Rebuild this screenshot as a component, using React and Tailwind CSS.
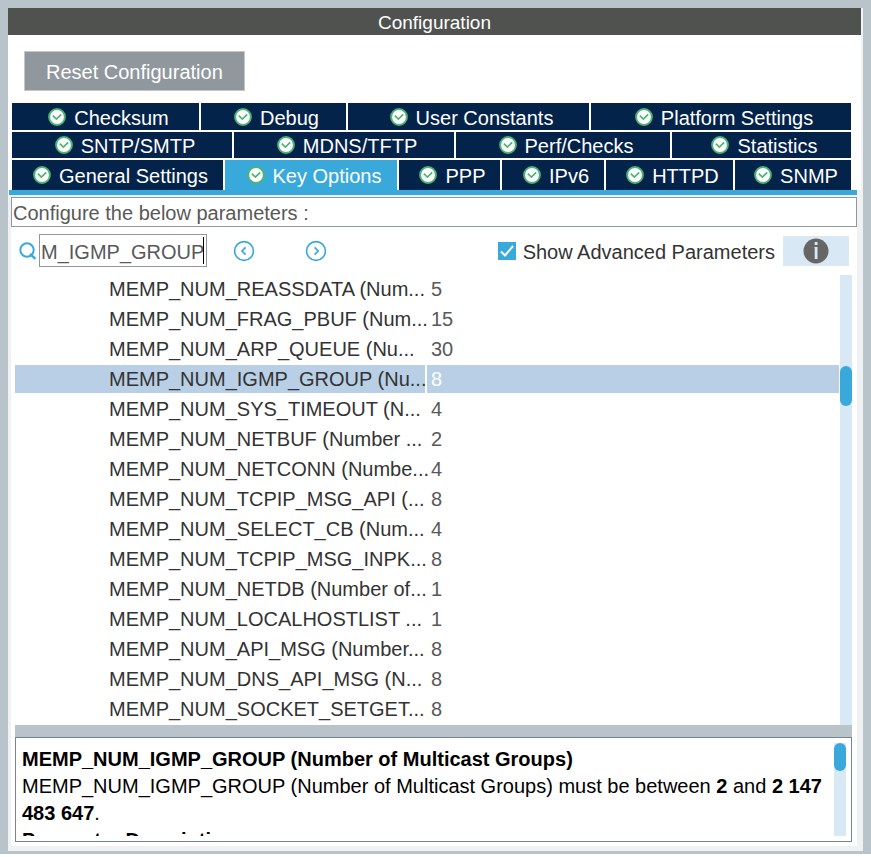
import React, { useState } from "react";

const tabRows = [
  {
    grid: "grid h-[27px] grid-cols-[187fr_145fr_241fr_260fr] gap-x-0.5",
    tabs: ["Checksum", "Debug", "User Constants", "Platform Settings"],
  },
  {
    grid: "grid h-[26px] grid-cols-[220fr_220fr_214fr_179fr] gap-x-0.5",
    tabs: ["SNTP/SMTP", "MDNS/TFTP", "Perf/Checks", "Statistics"],
  },
  {
    grid: "grid h-[30px] grid-cols-[211fr_172fr_101fr_102fr_127fr_116fr] gap-x-0.5",
    tabs: ["General Settings", "Key Options", "PPP", "IPv6", "HTTPD", "SNMP"],
  },
];

const params = [
  ["MEMP_NUM_REASSDATA (Num...", "5"],
  ["MEMP_NUM_FRAG_PBUF (Num...", "15"],
  ["MEMP_NUM_ARP_QUEUE (Nu...", "30"],
  ["MEMP_NUM_IGMP_GROUP (Nu...", "8"],
  ["MEMP_NUM_SYS_TIMEOUT (N...", "4"],
  ["MEMP_NUM_NETBUF (Number ...", "2"],
  ["MEMP_NUM_NETCONN (Numbe...", "4"],
  ["MEMP_NUM_TCPIP_MSG_API (...", "8"],
  ["MEMP_NUM_SELECT_CB (Num...", "4"],
  ["MEMP_NUM_TCPIP_MSG_INPK...", "8"],
  ["MEMP_NUM_NETDB (Number of...", "1"],
  ["MEMP_NUM_LOCALHOSTLIST ...", "1"],
  ["MEMP_NUM_API_MSG (Number...", "8"],
  ["MEMP_NUM_DNS_API_MSG (N...", "8"],
  ["MEMP_NUM_SOCKET_SETGET...", "8"],
];

const CheckBadge = () => (
  <svg viewBox="0 0 18 18" className="size-[18px] shrink-0" aria-hidden="true">
    <circle cx="9" cy="9" r="7.9" fill="#fff" stroke="#4db374" strokeWidth="2" />
    <path d="M4.8 7.6 L8.4 11 L13.2 6.4" fill="none" stroke="#4db374" strokeWidth="1.7" />
  </svg>
);

const SearchIcon = () => (
  <svg viewBox="0 0 18 18" className="size-[18px] shrink-0" fill="none" stroke="#39a9dc" aria-hidden="true">
    <circle cx="8" cy="8" r="6.7" strokeWidth="2" />
    <path d="M11 12 L16.5 16.8" strokeWidth="2.4" />
  </svg>
);

const ArrowIcon = ({ d }) => (
  <svg viewBox="0 0 22 22" className="size-[22px]" fill="none" stroke="#39a9dc" aria-hidden="true">
    <circle cx="11" cy="11" r="9.4" strokeWidth="1.6" />
    <path d={d} strokeWidth="1.7" />
  </svg>
);

const InfoIcon = () => (
  <svg viewBox="0 0 26 26" className="size-[26px]" aria-hidden="true">
    <circle cx="13" cy="13" r="12.5" fill="#666" />
    <rect x="11.7" y="4" width="2.8" height="3" fill="#d9e8f5" />
    <path d="M11.4 9 H14.5 V21 H11.7 V10 H11.4 Z" fill="#d9e8f5" />
  </svg>
);

const Tabs = ({ active, onSelect }) => (
  <div className="flex flex-col gap-0.5 pr-2.5 pl-1 leading-[24px]" role="tablist">
    {tabRows.map((row, i) => (
      <div key={i} className={row.grid} role="presentation">
        {row.tabs.map((tab) => (
          <button
            key={tab}
            type="button"
            role="tab"
            aria-selected={tab === active}
            onClick={() => onSelect(tab)}
            className={`flex items-center justify-center gap-2 pl-1.5 whitespace-nowrap text-white ${
              tab === active ? "bg-[#39a9dc]" : "bg-[#03234b]"
            }`}
          >
            <CheckBadge />
            <span className="pt-0.5">{tab}</span>
          </button>
        ))}
      </div>
    ))}
  </div>
);

const App = () => {
  const [active, setActive] = useState("Key Options");
  const [selected, setSelected] = useState(3);
  const [search, setSearch] = useState("M_IGMP_GROUP");
  const [advanced, setAdvanced] = useState(true);

  return (
    <div className="bg-[#b8c4ca] px-2 pt-2 pb-[3px] font-['Liberation_Sans',Arial,sans-serif] text-[20px] leading-[26px] text-[#333]">
      <div className="bg-[#f0f1f3] pb-[5px]">
        <div className="mr-0.5 bg-white">
          <h1 className="h-[27px] bg-[#50524f] pt-0.5 text-center text-[19px] leading-[26px] text-white">
            Configuration
          </h1>
          <div className="px-4 pt-4 pb-3">
            <button type="button" className="h-10 border border-[#c3c7ca] bg-[#90989e] px-[21px] pt-0.5 text-white">
              Reset Configuration
            </button>
          </div>
          <Tabs active={active} onSelect={setActive} />
        </div>
        <div className="mr-1.5 ml-px h-[5px] bg-[#39a9dc]"></div>

        <div className="mt-0.5 mr-1.5 ml-[3px] bg-white pb-1">
          <p className="h-[30px] border border-[#90989e] px-px pt-0.5 text-[#595959]">
            Configure the below parameters :
          </p>

          <div className="flex items-center pt-[7px] pr-2 pl-2">
            <label htmlFor="search" aria-label="Search">
              <SearchIcon />
            </label>
            <div className="relative ml-0.5 h-[33px] w-[168px] border border-[#90989e] pl-px">
              <input
                id="search"
                type="text"
                value={search}
                onChange={(e) => setSearch(e.target.value)}
                className="h-full w-full pt-1 text-[#595959] outline-none"
              />
              <span className="absolute top-0.5 right-0.5 h-[27px] w-px bg-black"></span>
            </div>
            <button type="button" aria-label="Previous" className="ml-[26px]">
              <ArrowIcon d="M12.6 7.4 L9 11 L12.6 14.6" />
            </button>
            <button type="button" aria-label="Next" className="ml-[50px]">
              <ArrowIcon d="M9.6 7.4 L13.2 11 L9.6 14.6" />
            </button>
            <div className="ml-auto flex items-center">
              <span className="relative mr-[7px] size-[18px]">
                <input
                  id="advanced"
                  type="checkbox"
                  checked={advanced}
                  onChange={(e) => setAdvanced(e.target.checked)}
                  className="block size-[18px] appearance-none border border-[#39a9dc] checked:bg-[#39a9dc]"
                />
                {advanced && (
                  <svg viewBox="0 0 18 18" className="pointer-events-none absolute inset-0 size-[18px]" aria-hidden="true">
                    <path d="M3 9.5 L7 13.5 L15 4" fill="none" stroke="#fff" strokeWidth="2" />
                  </svg>
                )}
              </span>
              <label htmlFor="advanced" className="pt-0.5">
                Show Advanced Parameters
              </label>
              <button type="button" aria-label="Info" className="ml-2 flex h-[30px] w-[66px] items-center justify-center bg-[#d9e8f5]">
                <InfoIcon />
              </button>
            </div>
          </div>

          <div className="mt-2 mr-[5px] ml-1 flex">
            <table className="w-full grow table-fixed border-separate border-spacing-0">
              <tbody>
                {params.map(([name, value], i) => (
                  <tr key={name} onClick={() => setSelected(i)}>
                    <td
                      className={`h-[30px] w-1/2 border-r-2 border-b-2 border-white p-0 pl-[94px] whitespace-nowrap ${
                        i === selected ? "bg-[#b8cfe5]" : ""
                      }`}
                    >
                      {name}
                    </td>
                    <td
                      className={`border-b-2 border-white p-0 pl-1 ${
                        i === selected ? "bg-[#b8cfe5] text-white" : "text-[#595959]"
                      }`}
                    >
                      {value}
                    </td>
                  </tr>
                ))}
              </tbody>
            </table>
            <div className="ml-px w-3 shrink-0 bg-[#d9e8f5] pt-[91px]">
              <div className="h-10 rounded-full bg-[#39a9dc]"></div>
            </div>
          </div>

          <div className="mr-[5px] ml-1 h-3 bg-[#b8c4ca]"></div>
          <div className="mr-[5px] ml-1 flex h-[105px] border border-[#758594] py-[5px] pr-[5px] pl-1.5 text-black">
            <div className="grow overflow-hidden pt-[3px] leading-[27px]">
              <h2 className="font-bold">MEMP_NUM_IGMP_GROUP (Number of Multicast Groups)</h2>
              <p>
                MEMP_NUM_IGMP_GROUP (Number of Multicast Groups) must be between <b>2</b> and{" "}
                <b>2 147 483 647</b>.
              </p>
              <h3 className="font-bold">Parameter Description</h3>
            </div>
            <div className="w-3 shrink-0 bg-[#d9e8f5]">
              <div className="h-7 rounded-full bg-[#39a9dc]"></div>
            </div>
          </div>
        </div>
      </div>
    </div>
  );
};

export default App;
